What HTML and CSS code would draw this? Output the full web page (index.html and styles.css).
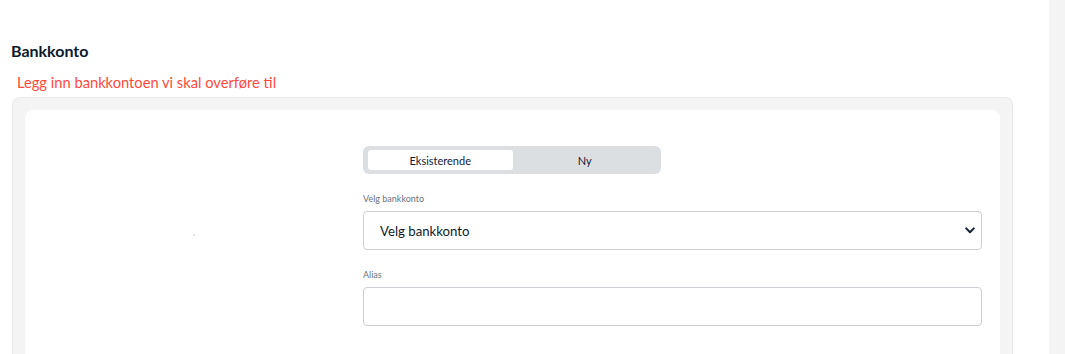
FILE: index.html
```html
<!DOCTYPE html>
<html lang="no">
<head>
    <meta charset="UTF-8">
    <meta name="viewport" content="width=device-width, initial-scale=1.0">
    <title>Bankkonto</title>
    <link rel="stylesheet" href="styles.css">
</head>
<body>
    <div class="page">
        <main class="content">
            <h2 class="section-title">Bankkonto</h2>
            <p class="section-hint">Legg inn bankkontoen vi skal overføre til</p>
            <div class="panel">
                <div class="card">
                    <div class="card-side">
                        <span class="placeholder-dot"></span>
                    </div>
                    <form class="account-form">
                        <div class="toggle">
                            <button type="button" class="toggle-btn active">Eksisterende</button>
                            <button type="button" class="toggle-btn">Ny</button>
                        </div>
                        <label class="field-label" for="account">Velg bankkonto</label>
                        <div class="select-wrap">
                            <select id="account" class="field select">
                                <option>Velg bankkonto</option>
                            </select>
                            <svg class="chevron" width="10" height="7" viewBox="0 0 10 7">
                                <path d="M1.2 1.4 L5 5.2 L8.8 1.4" fill="none" stroke="#142136" stroke-width="2" stroke-linecap="round" stroke-linejoin="round"/>
                            </svg>
                        </div>
                        <label class="field-label" for="alias">Alias</label>
                        <input id="alias" type="text" class="field">
                    </form>
                </div>
            </div>
        </main>
        <aside class="side-strip"></aside>
    </div>
</body>
</html>
```

FILE: styles.css
```css
body {
    margin: 0;
    font-family: Lato, "Open Sans", Arial, sans-serif;
    background-color: #ffffff;
    color: #0d1a2c;
    overflow: hidden;
}
.page {
    display: flex;
    height: 354px;
    overflow: hidden;
}
.content {
    flex: 1;
    padding: 42px 36px 0 12px;
}
.side-strip {
    width: 16px;
    background-color: #f4f4f5;
}
.section-title {
    margin: 0 0 0 -1px;
    font-size: 16px;
    font-weight: 700;
    color: #0b1a2e;
    line-height: 18px;
}
.section-hint {
    margin: 13px 0 0 5px;
    font-size: 14.7px;
    color: #ff4a3b;
    line-height: 18px;
}
.panel {
    margin-top: 6px;
    background-color: #f4f4f5;
    border: 1px solid #e9e9ec;
    border-bottom: none;
    border-radius: 8px 8px 0 0;
    padding: 12px 12px 0 12px;
    height: 245px;
}
.card {
    display: grid;
    grid-template-columns: 1fr 619px;
    background-color: #ffffff;
    border-radius: 8px;
    padding: 36px 18px 0 0;
    height: 260px;
}
.card-side {
    display: flex;
    justify-content: center;
    padding-top: 88px;
}
.placeholder-dot {
    width: 2px;
    height: 2px;
    background-color: #e2e2e2;
}
.account-form {
    display: flex;
    flex-direction: column;
}
.toggle {
    display: flex;
    width: 290px;
    padding: 4px;
    background-color: #dcdfe2;
    border-radius: 6px;
}
.toggle-btn {
    flex: 1;
    height: 20px;
    border: none;
    border-radius: 3px;
    background: transparent;
    font-family: inherit;
    font-size: 11px;
    color: #14203a;
    cursor: pointer;
    padding: 0;
}
.toggle-btn.active {
    background-color: #ffffff;
    margin-left: 1px;
}
.field-label {
    margin: 20px 0 7px;
    font-size: 9px;
    color: #6b7380;
    line-height: 10px;
}
.select-wrap {
    position: relative;
}
.field {
    box-sizing: border-box;
    width: 100%;
    height: 39px;
    border: 1px solid #ccd0d6;
    border-radius: 4px;
    background-color: #ffffff;
    font-family: inherit;
    font-size: 13.2px;
    color: #0d1a2c;
    padding: 0 16px;
    margin: 0;
}
.select {
    -webkit-appearance: none;
    appearance: none;
}
.chevron {
    position: absolute;
    right: 7px;
    top: 16px;
    pointer-events: none;
}
```
